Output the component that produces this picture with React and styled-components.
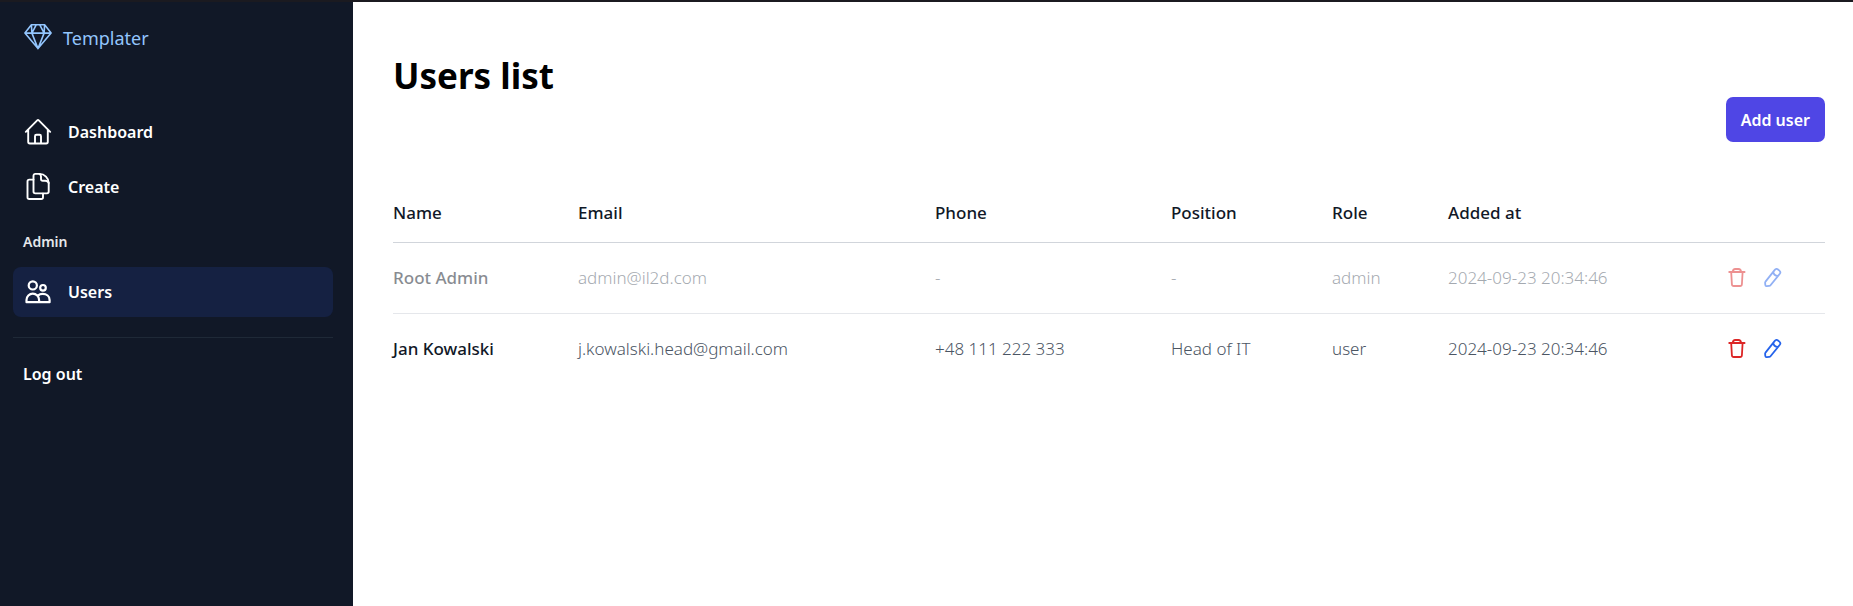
import React from "react";
import styled, { createGlobalStyle } from "styled-components";

const GlobalStyle = createGlobalStyle`
  *, *::before, *::after { box-sizing: border-box; }
  body {
    margin: 0;
    background: #ffffff;
    color: #000000;
    font-family: "Segoe UI", "Noto Sans", "Open Sans", sans-serif;
    font-size: 17px;
    line-height: 26px;
  }
`;

const Shell = styled.div`
  display: flex;
  min-height: 100vh;
  border-top: 2px solid #1b1a20;
`;

const Sidebar = styled.aside`
  display: flex;
  flex-direction: column;
  flex: 0 0 353px;
  padding: 16px 20px 20px 13px;
  background: #111827;
  color: #ffffff;
`;

const Brand = styled.a`
  display: flex;
  align-items: center;
  gap: 10px;
  padding: 0 10px;
  margin-bottom: 49px;
  height: 40px;
  color: #93c5fd;
  font-size: 18px;
  text-decoration: none;
`;

const Nav = styled.nav`
  display: flex;
  flex-direction: column;
  gap: 5px;
`;

const NavLink = styled.a`
  display: flex;
  align-items: center;
  gap: 15px;
  height: 50px;
  padding: 0 10px;
  border-radius: 8px;
  background: ${(p) => (p.$active ? "#152142" : "transparent")};
  color: #ffffff;
  font-size: 16px;
  font-weight: 600;
  text-decoration: none;
`;

const SectionLabel = styled.h2`
  margin: 12px 0 7px;
  padding: 0 10px;
  color: #e5e7eb;
  font-size: 14px;
  font-weight: 600;
  line-height: 36px;
`;

const Divider = styled.hr`
  width: 100%;
  margin: 20px 0 11px;
  border: 0;
  border-top: 1px solid #1f2937;
`;

const Main = styled.main`
  flex: 1;
  min-width: 0;
  padding: 53px 28px 40px 40px;
`;

const Title = styled.h1`
  margin: 0;
  font-size: 35px;
  font-weight: 700;
  line-height: 42px;
`;

const Actions = styled.div`
  display: flex;
  justify-content: flex-end;
  margin-bottom: 43px;
`;

const PrimaryButton = styled.button`
  height: 45px;
  padding: 0 15px;
  border: 0;
  border-radius: 7px;
  background: #4f46e5;
  color: #ffffff;
  font: inherit;
  font-size: 16px;
  font-weight: 600;
  cursor: pointer;
`;

const Table = styled.table`
  width: 100%;
  border-collapse: collapse;
  table-layout: fixed;
  text-align: left;
`;

const Col = styled.col`
  width: ${(p) => p.$width || "auto"};
`;

const HeadCell = styled.th`
  height: 57px;
  padding: 0;
  border-bottom: 1px solid #d1d5db;
  color: #111827;
  font-weight: 500;
`;

const Row = styled.tr`
  opacity: ${(p) => (p.$muted ? 0.5 : 1)};
`;

const Cell = styled.td`
  height: 71px;
  padding: 0;
  border-bottom: ${(p) => (p.$last ? "0" : "1px solid #e5e7eb")};
  color: #4b5563;
  font-weight: 300;
  white-space: nowrap;
`;

const NameCell = styled(Cell)`
  color: #111827;
  font-weight: 500;
`;

const IconGroup = styled.div`
  display: flex;
  gap: 16px;
`;

const IconButton = styled.button`
  display: flex;
  padding: 0;
  border: 0;
  background: none;
  color: ${(p) => p.$color};
  cursor: pointer;
`;

const Icon = styled.svg.attrs({
  fill: "none",
  stroke: "currentColor",
  strokeLinecap: "round",
  strokeLinejoin: "round",
  "aria-hidden": true,
})`
  display: block;
  flex: none;
`;

const DiamondIcon = () => (
  <Icon width="30" height="30" viewBox="0 0 30 30" strokeWidth="1.6">
    <path d="M8.4 1.8h13.2l6.5 8.3L15 25.6 1.9 10.1ZM1.9 10.1h26.2M8.4 1.8l.5 8.3L15 25.6l6.1-15.5.5-8.3M8.9 10.1 13.2 1.8M16.8 1.8l4.3 8.3" />
  </Icon>
);

const HomeIcon = () => (
  <Icon width="30" height="30" viewBox="0 0 30 30" strokeWidth="1.9">
    <path d="M2.8 14.8 14.2 3.4a1.2 1.2 0 0 1 1.6 0l11.4 11.4M5.2 12.6v12.2c0 1 .6 1.7 1.6 1.7h16.4c1 0 1.6-.7 1.6-1.7V12.6M12 26.4v-7.2c0-.9.5-1.4 1.4-1.4h3.2c.9 0 1.4.5 1.4 1.4v7.2" />
  </Icon>
);

const DocumentsIcon = () => (
  <Icon width="30" height="30" viewBox="0 0 30 30" strokeWidth="1.9">
    <path d="M10.5 7.6H6.3c-1.1 0-1.8.7-1.8 1.8v15.8c0 1.1.7 1.8 1.8 1.8h11.9c1.1 0 1.8-.7 1.8-1.8v-3.6" />
    <path d="M12.3 1.9h4.2c5 0 9.2 4.1 9.2 9.1v8.6c0 1.1-.7 1.8-1.8 1.8H12.3c-1.1 0-1.8-.7-1.8-1.8V3.7c0-1.1.7-1.8 1.8-1.8Z" />
    <path d="M16.4 1.9c1.1.5 1.6 1.4 1.6 2.6v2.4c0 1.1.7 1.8 1.8 1.8h2.4c1.8 0 3.1.8 3.5 2.3" />
  </Icon>
);

const UsersIcon = () => (
  <Icon width="30" height="30" viewBox="0 0 30 30" strokeWidth="2.2">
    <circle cx="9.8" cy="8.4" r="4.1" />
    <circle cx="20" cy="10.8" r="2.8" />
    <path d="M3.5 25.2V23a6.3 6.3 0 0 1 12.6 0v2.2ZM14.9 18.6c1.2-1.1 2.8-1.7 4.7-1.7 4 0 7 2.5 7 6v2.3H16.1" />
  </Icon>
);

const TrashIcon = () => (
  <Icon width="20" height="22" viewBox="0 0 20 22" strokeWidth="1.8">
    <path d="M1.2 5h15.4M4.8 4.8c.1-1.8 1-2.8 2.5-2.8h3.2c1.5 0 2.4 1 2.5 2.8M3.2 5.2l.7 12c.1 1.2.7 1.8 1.9 1.8H12c1.2 0 1.8-.6 1.9-1.8l.7-12" />
  </Icon>
);

const PencilIcon = () => (
  <Icon width="20" height="22" viewBox="0 0 20 22" strokeWidth="1.8">
    <path d="M1.5 14.6 10.8 2.9c.9-1.1 2.1-1.3 3.2-.4l1.4 1.1c1.1.9 1.2 2.1.4 3.2L6.5 18.3c-.3.4-.7.6-1.2.6l-2.6.2c-.9.1-1.3-.3-1.4-1.1l-.2-2.3c0-.4.1-.8.4-1.1ZM9.3 4.9c.2 2.5 1.9 4 4.9 3.9" />
  </Icon>
);

const columns = [
  { label: "Name", width: "185px" },
  { label: "Email", width: "357px" },
  { label: "Phone", width: "236px" },
  { label: "Position", width: "161px" },
  { label: "Role", width: "116px" },
  { label: "Added at" },
];

const users = [
  {
    name: "Root Admin",
    email: "admin@il2d.com",
    phone: "-",
    position: "-",
    role: "admin",
    added: "2024-09-23 20:34:46",
    locked: true,
  },
  {
    name: "Jan Kowalski",
    email: "j.kowalski.head@gmail.com",
    phone: "+48 111 222 333",
    position: "Head of IT",
    role: "user",
    added: "2024-09-23 20:34:46",
    locked: false,
  },
];

export default function App() {
  return (
    <>
      <GlobalStyle />
      <Shell>
        <Sidebar>
          <Brand href="#home">
            <DiamondIcon />
            Templater
          </Brand>
          <Nav>
            <NavLink href="#dashboard">
              <HomeIcon />
              Dashboard
            </NavLink>
            <NavLink href="#create">
              <DocumentsIcon />
              Create
            </NavLink>
          </Nav>
          <SectionLabel>Admin</SectionLabel>
          <Nav>
            <NavLink href="#users" $active aria-current="page">
              <UsersIcon />
              Users
            </NavLink>
          </Nav>
          <Divider />
          <NavLink href="#logout">Log out</NavLink>
        </Sidebar>
        <Main>
          <Title>Users list</Title>
          <Actions>
            <PrimaryButton type="button">Add user</PrimaryButton>
          </Actions>
          <Table>
            <colgroup>
              {columns.map((c) => (
                <Col key={c.label} $width={c.width} />
              ))}
              <Col $width="97px" />
            </colgroup>
            <thead>
              <tr>
                {columns.map((c) => (
                  <HeadCell key={c.label} scope="col">
                    {c.label}
                  </HeadCell>
                ))}
                <HeadCell as="td" />
              </tr>
            </thead>
            <tbody>
              {users.map((u, i) => {
                const last = i === users.length - 1;
                return (
                  <Row key={u.email} $muted={u.locked}>
                    <NameCell $last={last}>{u.name}</NameCell>
                    <Cell $last={last}>{u.email}</Cell>
                    <Cell $last={last}>{u.phone}</Cell>
                    <Cell $last={last}>{u.position}</Cell>
                    <Cell $last={last}>{u.role}</Cell>
                    <Cell $last={last}>{u.added}</Cell>
                    <Cell $last={last}>
                      <IconGroup>
                        <IconButton type="button" $color="#dc2626" aria-label={`Delete ${u.name}`}>
                          <TrashIcon />
                        </IconButton>
                        <IconButton type="button" $color="#2563eb" aria-label={`Edit ${u.name}`}>
                          <PencilIcon />
                        </IconButton>
                      </IconGroup>
                    </Cell>
                  </Row>
                );
              })}
            </tbody>
          </Table>
        </Main>
      </Shell>
    </>
  );
}
